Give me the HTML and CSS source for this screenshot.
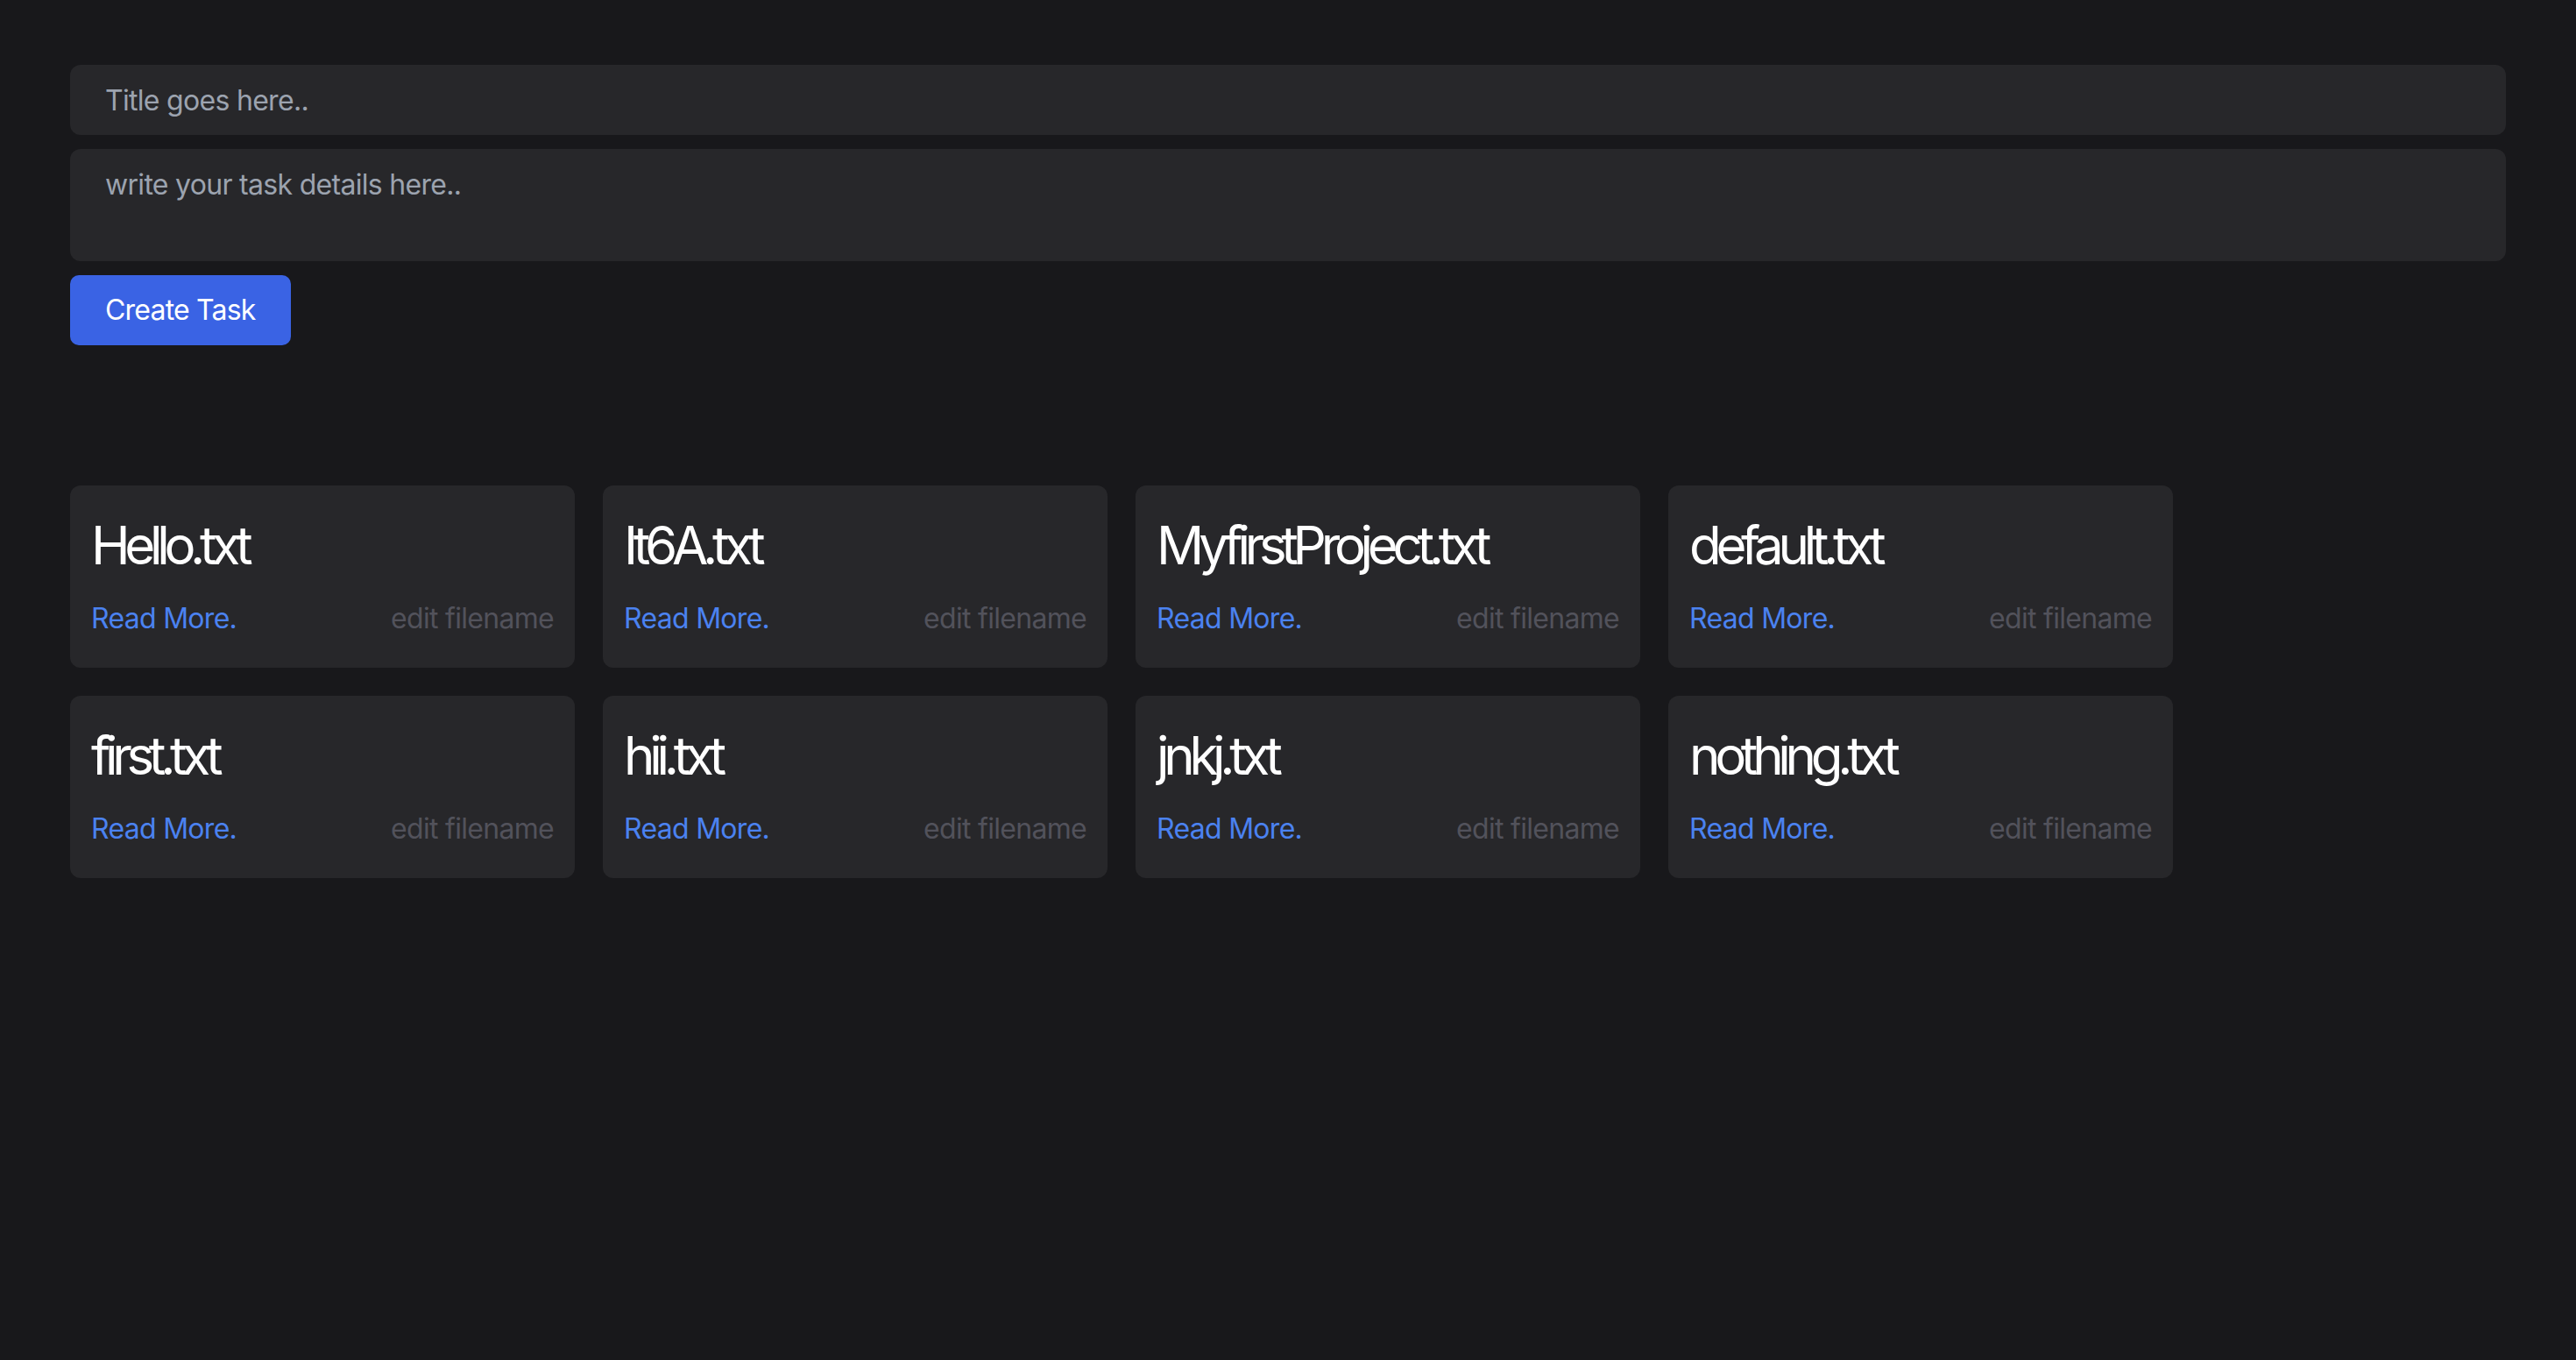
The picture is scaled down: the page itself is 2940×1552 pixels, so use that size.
FILE: index.html
```html
<!DOCTYPE html>
<html lang="en">
<head>
<meta charset="utf-8">
<title>Tasks</title>
<link rel="stylesheet" href="styles.css">
</head>
<body>
<main class="page">
  <form class="task-form">
    <input class="field field-title" type="text" placeholder="Title goes here..">
    <textarea class="field field-details" placeholder="write your task details here.."></textarea>
    <button class="btn-create" type="button">Create Task</button>
  </form>
  <section class="cards">
    <div class="card"><h3 class="card-title">Hello.txt</h3><div class="card-actions"><a class="read-more" href="#">Read More.</a><a class="edit" href="#">edit filename</a></div></div>
    <div class="card"><h3 class="card-title">It6A.txt</h3><div class="card-actions"><a class="read-more" href="#">Read More.</a><a class="edit" href="#">edit filename</a></div></div>
    <div class="card"><h3 class="card-title">MyfirstProject.txt</h3><div class="card-actions"><a class="read-more" href="#">Read More.</a><a class="edit" href="#">edit filename</a></div></div>
    <div class="card"><h3 class="card-title">default.txt</h3><div class="card-actions"><a class="read-more" href="#">Read More.</a><a class="edit" href="#">edit filename</a></div></div>
    <div class="card"><h3 class="card-title">first.txt</h3><div class="card-actions"><a class="read-more" href="#">Read More.</a><a class="edit" href="#">edit filename</a></div></div>
    <div class="card"><h3 class="card-title">hii.txt</h3><div class="card-actions"><a class="read-more" href="#">Read More.</a><a class="edit" href="#">edit filename</a></div></div>
    <div class="card"><h3 class="card-title">jnkj.txt</h3><div class="card-actions"><a class="read-more" href="#">Read More.</a><a class="edit" href="#">edit filename</a></div></div>
    <div class="card"><h3 class="card-title">nothing.txt</h3><div class="card-actions"><a class="read-more" href="#">Read More.</a><a class="edit" href="#">edit filename</a></div></div>
  </section>
</main>
</body>
</html>
```
FILE: styles.css
```css
* { box-sizing: border-box; }
html, body {
  margin: 0;
  background: #18181b;
  min-height: 100%;
}
body {
  font-family: Inter, "Liberation Sans", sans-serif;
  color: #fff;
}
.page {
  padding: 74px 80px 80px;
}
.task-form {
  display: flex;
  flex-direction: column;
  align-items: flex-start;
  gap: 16px;
}
.field {
  display: block;
  width: 100%;
  background: #27272a;
  border: none;
  outline: none;
  border-radius: 12px;
  color: #fff;
  font-family: Inter, "Liberation Sans", sans-serif;
  font-size: 32px;
  line-height: 48px;
  letter-spacing: -0.7px;
  padding: 16px 40px;
  margin: 0;
}
.field::placeholder { color: #9ca3af; opacity: 1; }
.field-title { height: 80px; }
.field-details { height: 128px; resize: none; padding-top: 17px; }
.btn-create {
  background: #3a63e4;
  color: #fff;
  border: none;
  border-radius: 10px;
  font-family: Inter, "Liberation Sans", sans-serif;
  font-size: 32px;
  line-height: 48px;
  padding: 16px 40px;
  height: 80px;
  margin: 0;
  letter-spacing: -0.8px;
}
.cards {
  margin-top: 160px;
  display: flex;
  flex-wrap: wrap;
  gap: 32px;
}
.card {
  width: 576px;
  height: 208px;
  background: #27272a;
  border-radius: 12px;
  padding: 32px 24px;
}
.card-title {
  margin: 0;
  font-size: 60px;
  line-height: 72px;
  font-weight: 400;
  letter-spacing: -0.105em;
  color: #fff;
}
.card-actions {
  margin-top: 24px;
  display: flex;
  justify-content: space-between;
  font-size: 32px;
  line-height: 48px;
  letter-spacing: -0.7px;
}
.card-actions a { text-decoration: none; }
.read-more { color: #4b82f0; }
.edit { color: #52525b; }
```
